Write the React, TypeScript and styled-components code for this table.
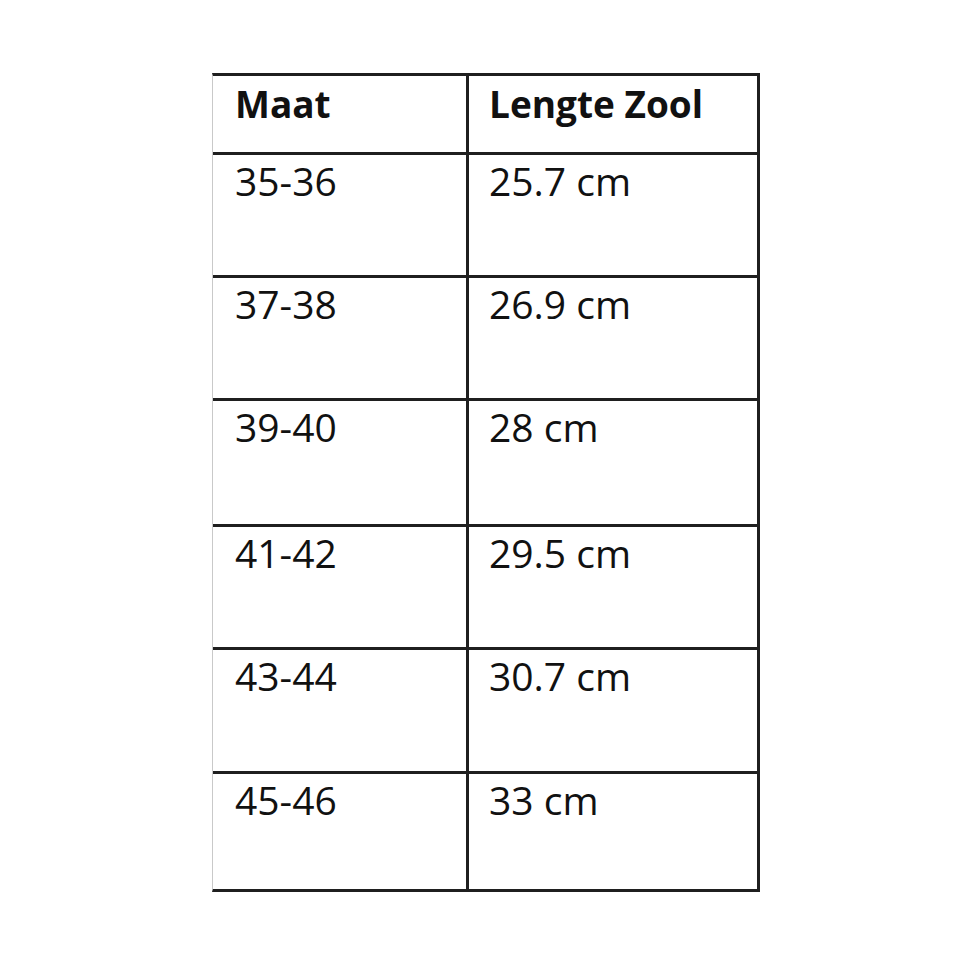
import React from 'react';
import styled, { createGlobalStyle } from 'styled-components';

const GlobalStyle = createGlobalStyle`
  html, body {
    margin: 0;
    padding: 0;
    background: #ffffff;
  }
`;

const Page = styled.div`
  width: 980px;
  height: 980px;
  box-sizing: border-box;
  padding: 73px 0 0 212px;
  background: #ffffff;
  font-family: "Open Sans", "Liberation Sans", sans-serif;
  color: #111111;
`;

const SizeTable = styled.div`
  display: grid;
  grid-template-columns: 256px 288px;
  width: 548px;
  box-sizing: border-box;
  border-top: 3px solid #1f1f1f;
  border-right: 3px solid #1f1f1f;
  border-bottom: 3px solid #1f1f1f;
  border-left: 1px solid #c9c9c9;
`;

const Row = styled.div<{ $height: number; $last?: boolean }>`
  display: contents;

  & > div {
    height: ${p => p.$height}px;
    border-bottom: ${p => (p.$last ? 'none' : '3px solid #1f1f1f')};
  }
`;

const Cell = styled.div<{ $first?: boolean; $head?: boolean }>`
  box-sizing: content-box;
  padding-top: ${p => (p.$head ? '6px' : '3px')};
  padding-left: ${p => (p.$first ? '22px' : '20px')};
  border-right: ${p => (p.$first ? '3px solid #1f1f1f' : 'none')};
  font-size: ${p => (p.$head ? '37px' : '39px')};
  line-height: 1.2;
  font-weight: ${p => (p.$head ? 700 : 400)};
  white-space: nowrap;
`;

const rows = [
  { size: '35-36', length: '25.7 cm', h: 117 },
  { size: '37-38', length: '26.9 cm', h: 117 },
  { size: '39-40', length: '28 cm', h: 120 },
  { size: '41-42', length: '29.5 cm', h: 117 },
  { size: '43-44', length: '30.7 cm', h: 118 },
  { size: '45-46', length: '33 cm', h: 112 },
];

const App: React.FC = () => {
  return (
    <>
      <GlobalStyle />
      <Page>
        <SizeTable>
          <Row $height={70}>
            <Cell $first $head>Maat</Cell>
            <Cell $head>Lengte Zool</Cell>
          </Row>
          {rows.map((r, i) => (
            <Row key={r.size} $height={r.h} $last={i === rows.length - 1}>
              <Cell $first>{r.size}</Cell>
              <Cell>{r.length}</Cell>
            </Row>
          ))}
        </SizeTable>
      </Page>
    </>
  );
};

export default App;
